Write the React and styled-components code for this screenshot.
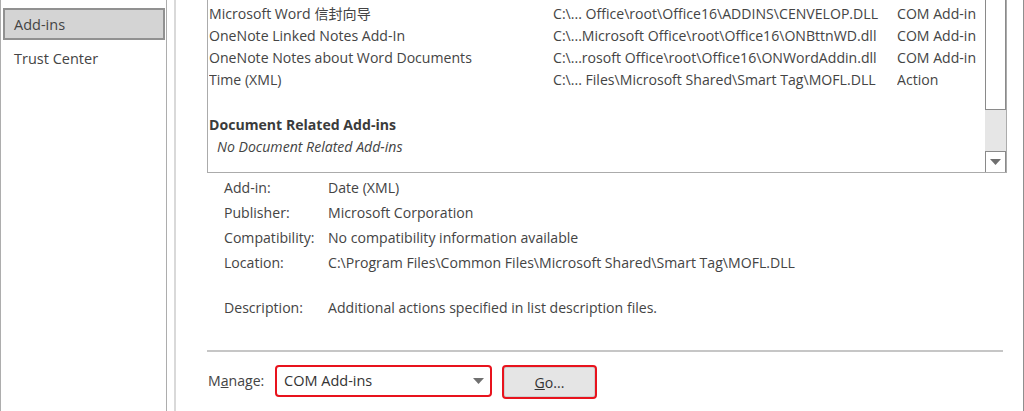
import React from "react"
import styled, { createGlobalStyle } from "styled-components"

const GlobalStyle = createGlobalStyle`
  html, body {
    margin: 0;
    padding: 0;
    background: #fff;
    overflow: hidden;
  }
  body {
    font-family: "Open Sans", "Noto Sans CJK SC", sans-serif;
    color: #444;
  }
`

const Frame = styled.div`
  display: flex;
  width: 1024px;
  height: 411px;
  overflow: hidden;
  font-size: 14.1px;
`

const Nav = styled.div`
  width: 167px;
  flex-shrink: 0;
  border-left: 1px solid #adadad;
  border-right: 1px solid #adadad;
  padding-top: 8px;
  box-sizing: border-box;
`

const NavItem = styled.div`
  height: 32px;
  margin: 0 1px 2px 2px;
  padding-left: 9px;
  display: flex;
  align-items: center;
  font-size: 14.5px;
  color: #444;
  box-sizing: border-box;
  border: 2px solid ${({ selected }) => (selected ? "#919191" : "transparent")};
  background: ${({ selected }) => (selected ? "#d4d4d4" : "transparent")};
`

const Divider = styled.div`
  width: 2px;
  margin-left: 7px;
  background: #d9d9d9;
  flex-shrink: 0;
`

const Main = styled.div`
  flex: 1;
  padding: 0 16px 0 31px;
  border-right: 1px solid #8f8f8f;
  display: flex;
  flex-direction: column;
`

const ListBox = styled.div`
  display: flex;
  height: 173px;
  border: 1px solid #ababab;
  border-top: none;
  box-sizing: border-box;
`

const ListContent = styled.div`
  flex: 1;
  padding: 2px 0 0 1px;
`

const Row = styled.div`
  display: grid;
  grid-template-columns: 344px 344px 1fr;
  height: 22px;
  align-items: center;
  white-space: nowrap;
  overflow: hidden;
`

const Cell = styled.span`
  overflow: hidden;
`

const Spacer = styled.div`
  height: ${({ h }) => h}px;
`

const GroupTitle = styled.div`
  height: 22px;
  display: flex;
  align-items: center;
  font-weight: 700;
  color: #3b3b3b;
`

const EmptyNote = styled.div`
  height: 22px;
  display: flex;
  align-items: center;
  padding-left: 8px;
  font-style: italic;
`

const ScrollBar = styled.div`
  width: 21px;
  display: flex;
  flex-direction: column;
  background: #e6e6e6;
`

const Thumb = styled.div`
  height: 110px;
  background: #fff;
  border: 1px solid #8a8a8a;
  border-top: none;
  box-sizing: border-box;
`

const Track = styled.div`
  flex: 1;
`

const ArrowButton = styled.div`
  height: 21px;
  background: #fff;
  border: 1px solid #8a8a8a;
  border-bottom: none;
  box-sizing: border-box;
  display: flex;
  align-items: center;
  justify-content: center;
`

const Details = styled.div`
  display: grid;
  grid-template-columns: 104px 1fr;
  padding: 2px 0 0 17px;
`

const Label = styled.div`
  height: 25px;
  display: flex;
  align-items: center;
`

const Value = styled(Label)``

const Gap = styled.div`
  grid-column: 1 / 3;
  height: 20px;
`

const Separator = styled.div`
  height: 2px;
  background: #c6c6c6;
  margin-top: 30px;
  width: 796px;
`

const ManageRow = styled.div`
  display: flex;
  align-items: center;
  margin-top: 10px;
`

const ManageLabel = styled.span`
  margin-left: 1px;
  width: 67px;
`

const Select = styled.div`
  width: 217px;
  height: 32px;
  box-sizing: border-box;
  border: 2px solid #e8131d;
  border-radius: 4px;
  display: flex;
  align-items: center;
  justify-content: space-between;
  padding: 0 6px 0 7px;
  color: #333;
  font-size: 14.5px;
`

const Button = styled.div`
  width: 95px;
  height: 34px;
  margin-left: 10px;
  margin-top: 3px;
  box-sizing: border-box;
  border: 2px solid #e8131d;
  border-radius: 4px;
  background: #e5e5e5;
  box-shadow: inset 0 0 0 1px #cfcfcf;
  display: flex;
  align-items: center;
  justify-content: center;
  color: #333;
`

const rows = [
  ["Microsoft Word 信封向导", "C:\\... Office\\root\\Office16\\ADDINS\\CENVELOP.DLL", "COM Add-in"],
  ["OneNote Linked Notes Add-In", "C:\\...Microsoft Office\\root\\Office16\\ONBttnWD.dll", "COM Add-in"],
  ["OneNote Notes about Word Documents", "C:\\...rosoft Office\\root\\Office16\\ONWordAddin.dll", "COM Add-in"],
  ["Time (XML)", "C:\\... Files\\Microsoft Shared\\Smart Tag\\MOFL.DLL", "Action"],
]

const details = [
  ["Add-in:", "Date (XML)"],
  ["Publisher:", "Microsoft Corporation"],
  ["Compatibility:", "No compatibility information available"],
  ["Location:", "C:\\Program Files\\Common Files\\Microsoft Shared\\Smart Tag\\MOFL.DLL"],
]

const Caret = ({ color = "#707070" }) => (
  <svg width="11" height="6" viewBox="0 0 11 6">
    <path d="M0 0 L11 0 L5.5 6 Z" fill={color} />
  </svg>
)

const App = () => {
  return (
    <Frame>
      <GlobalStyle />
      <Nav>
        <NavItem selected>Add-ins</NavItem>
        <NavItem>Trust Center</NavItem>
      </Nav>
      <Divider />
      <Main>
        <ListBox>
          <ListContent>
            {rows.map(r => (
              <Row key={r[0]}>
                <Cell>{r[0]}</Cell>
                <Cell>{r[1]}</Cell>
                <Cell>{r[2]}</Cell>
              </Row>
            ))}
            <Spacer h={23} />
            <GroupTitle>Document Related Add-ins</GroupTitle>
            <EmptyNote>No Document Related Add-ins</EmptyNote>
          </ListContent>
          <ScrollBar>
            <Thumb />
            <Track />
            <ArrowButton>
              <Caret color="#6f6f6f" />
            </ArrowButton>
          </ScrollBar>
        </ListBox>

        <Details>
          {details.map(d => (
            <React.Fragment key={d[0]}>
              <Label>{d[0]}</Label>
              <Value>{d[1]}</Value>
            </React.Fragment>
          ))}
          <Gap />
          <Label>Description:</Label>
          <Value>Additional actions specified in list description files.</Value>
        </Details>

        <Separator />

        <ManageRow>
          <ManageLabel>M<u>a</u>nage:</ManageLabel>
          <Select>
            <span>COM Add-ins</span>
            <Caret />
          </Select>
          <Button>
            <span><u>G</u>o...</span>
          </Button>
        </ManageRow>
      </Main>
    </Frame>
  )
}

export default App
